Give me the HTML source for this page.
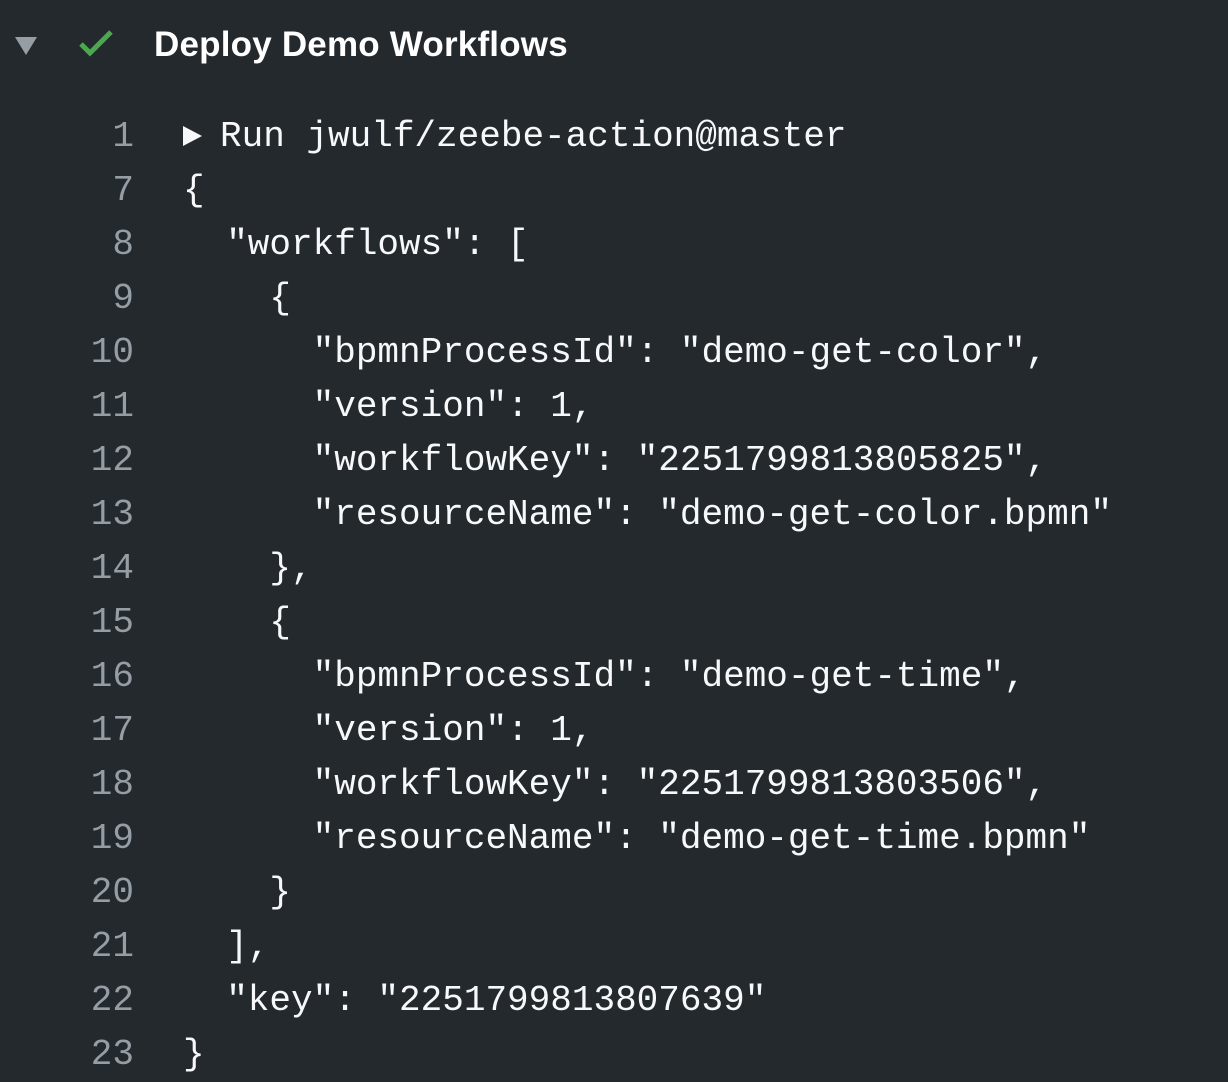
<!DOCTYPE html>
<html><head><style>
html,body{margin:0;padding:0;background:#24292e;width:1228px;height:1078px;overflow:hidden}
.h{position:absolute;left:0;top:0;height:92px;width:1228px}
.tri{position:absolute;left:15px;top:37px;width:0;height:0;border-left:11px solid transparent;border-right:11px solid transparent;border-top:18px solid #959da5}
.t{position:absolute;left:154px;top:25px;font:bold 35px "Liberation Sans",sans-serif;color:#fff;letter-spacing:0.2px}
.code{position:absolute;left:0;top:110px;font:36px/54px "Liberation Mono",monospace;color:#f6f8fa}
.l{height:54px;white-space:pre;position:relative}
.n{position:absolute;right:calc(100% - 134px);color:#959da5;text-align:right;width:100px}
.c{position:absolute;left:183px}
.play{display:inline-block;width:0;height:0;border-top:10px solid transparent;border-bottom:10px solid transparent;border-left:19px solid #f6f8fa;margin-right:18px;vertical-align:0}
</style></head><body>
<div class="h"><div class="tri"></div>
<svg style="position:absolute;left:78px;top:28px" width="36" height="30" viewBox="0 0 36 30"><path d="M3 16 L12 25 L33 4" stroke="#4aa84d" stroke-width="5" fill="none"/></svg>
<div class="t">Deploy Demo Workflows</div></div>
<div class="code">
<div class="l"><span class="n">1</span><span class="c"><span class="play"></span>Run jwulf/zeebe-action@master</span></div>
<div class="l"><span class="n">7</span><span class="c">{</span></div>
<div class="l"><span class="n">8</span><span class="c">  "workflows": [</span></div>
<div class="l"><span class="n">9</span><span class="c">    {</span></div>
<div class="l"><span class="n">10</span><span class="c">      "bpmnProcessId": "demo-get-color",</span></div>
<div class="l"><span class="n">11</span><span class="c">      "version": 1,</span></div>
<div class="l"><span class="n">12</span><span class="c">      "workflowKey": "2251799813805825",</span></div>
<div class="l"><span class="n">13</span><span class="c">      "resourceName": "demo-get-color.bpmn"</span></div>
<div class="l"><span class="n">14</span><span class="c">    },</span></div>
<div class="l"><span class="n">15</span><span class="c">    {</span></div>
<div class="l"><span class="n">16</span><span class="c">      "bpmnProcessId": "demo-get-time",</span></div>
<div class="l"><span class="n">17</span><span class="c">      "version": 1,</span></div>
<div class="l"><span class="n">18</span><span class="c">      "workflowKey": "2251799813803506",</span></div>
<div class="l"><span class="n">19</span><span class="c">      "resourceName": "demo-get-time.bpmn"</span></div>
<div class="l"><span class="n">20</span><span class="c">    }</span></div>
<div class="l"><span class="n">21</span><span class="c">  ],</span></div>
<div class="l"><span class="n">22</span><span class="c">  "key": "2251799813807639"</span></div>
<div class="l"><span class="n">23</span><span class="c">}</span></div>
</div>
</body></html>
